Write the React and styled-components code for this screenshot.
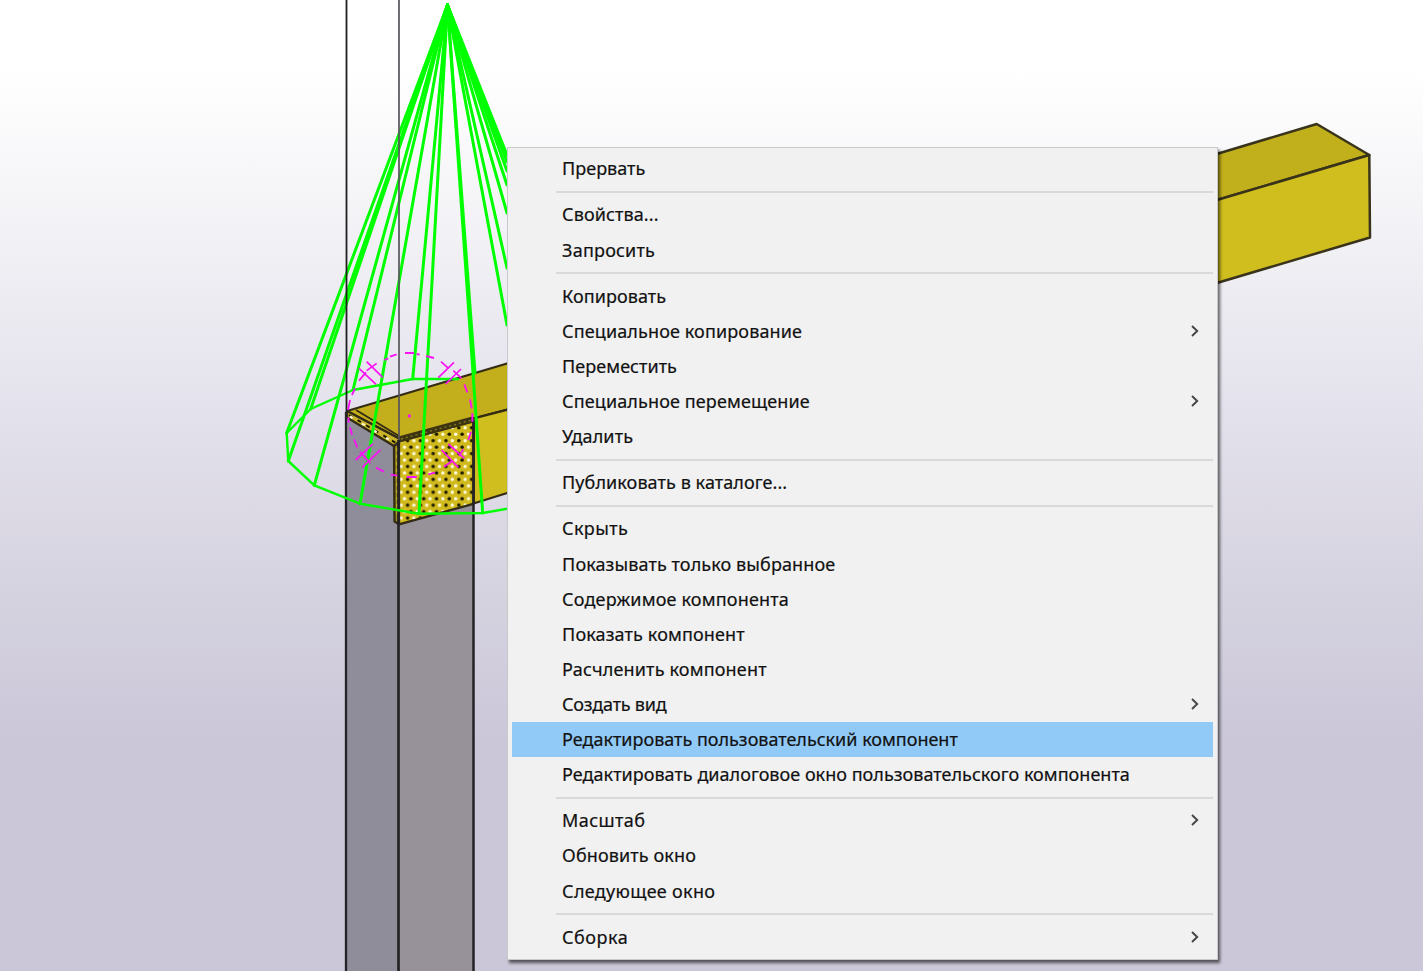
import React from "react";
import styled, { createGlobalStyle } from "styled-components";

const GlobalStyle = createGlobalStyle`
  html, body { margin: 0; padding: 0; overflow: hidden; }
`;

const Viewport = styled.main`
  position: relative;
  width: 1423px;
  height: 971px;
  overflow: hidden;
  background: linear-gradient(
    #ffffff 0, #ffffff 70px, #fbfbfc 120px, #f0eff4 260px,
    #e4e2ec 405px, #d7d4e1 575px, #cbc7d9 740px, #cbc7d9 971px
  );
`;

const Scene = styled.svg`
  display: block;
  width: 1423px;
  height: 971px;
`;

const ContextMenu = styled.ul`
  position: absolute;
  left: 507px;
  top: 147px;
  box-sizing: border-box;
  width: 711px;
  height: 813px;
  margin: 0;
  padding: 3.5px 4.5px 0 3.5px;
  list-style: none;
  background: #f1f1f1;
  border: 1px solid #c9c9cb;
  box-shadow: 2px 3px 3px 0 rgba(0, 0, 0, 0.6);
  clip-path: inset(0 -8px -8px 0);
  font-family: "Noto Sans", "Open Sans", sans-serif;
  font-size: 18px;
  color: #111;
`;

const MenuItem = styled.li`
  display: flex;
  align-items: center;
  justify-content: space-between;
  box-sizing: border-box;
  height: 35.1px;
  padding: 0 13px 1.6px 50.6px;
  background: ${(p) => (p.$active ? "#91c9f7" : "transparent")};
  cursor: default;
`;

const Label = styled.span`
  white-space: nowrap;
  line-height: 24px;
  letter-spacing: ${(p) => p.$tracking}px;
  -webkit-text-stroke: 0.2px #111;
`;

const Divider = styled.li`
  height: 2px;
  margin: 4.5px 0 4.6px 44.5px;
  background: #d9d9d9;
`;

const Arrow = styled.svg`
  flex: none;
  width: 10px;
  height: 14px;
  fill: none;
  stroke: #454545;
  stroke-width: 1.9;
`;

const groups = [
  [["Прервать", 0.0]],
  [["Свойства...", 0.1], ["Запросить", 0.2]],
  [
    ["Копировать", 0.05],
    ["Специальное копирование", 0.12, "sub"],
    ["Переместить", 0.05],
    ["Специальное перемещение", 0.12, "sub"],
    ["Удалить", 0.12],
  ],
  [["Публиковать в каталоге...", 0.08]],
  [
    ["Скрыть", 0.35],
    ["Показывать только выбранное", 0.1],
    ["Содержимое компонента", 0.18],
    ["Показать компонент", 0.13],
    ["Расчленить компонент", 0.17],
    ["Создать вид", -0.24, "sub"],
    ["Редактировать пользовательский компонент", -0.01, "active"],
    ["Редактировать диалоговое окно пользовательского компонента", 0.025],
  ],
  [["Масштаб", 0.4, "sub"], ["Обновить окно", 0.12], ["Следующее окно", 0.3]],
  [["Сборка", 0.5, "sub"]],
];

const coneBase = [
  [286.7, 433], [288.3, 461], [314.3, 485.3], [360, 503.7], [419, 513.7],
  [482.7, 513], [310.7, 409], [353, 390], [412.7, 379], [475, 373],
  [507, 325], [507, 268], [507, 213], [507, 185], [507, 171], [507, 162], [507, 155],
];

function Model() {
  return (
    <Scene viewBox="0 0 1423 971">
      <defs>
        <pattern id="studs" x="402.8" y="508.4" width="12.8" height="12.9" patternUnits="userSpaceOnUse">
          <rect width="12.8" height="12.9" fill="#d0b91c" />
          <g fill="#fffbe0">
            <circle cx="1.7" cy="3.2" r="1.7" />
            <circle cx="11.1" cy="9.65" r="1.7" />
          </g>
          <g fill="#1c1800">
            <circle cx="8.1" cy="3.2" r="1.75" />
            <circle cx="4.8" cy="9.65" r="1.75" />
          </g>
        </pattern>
      </defs>

      {/* column */}
      <path d="M346 412L399 444V971H346Z" fill="#8f8d9a" />
      <path d="M399 440L473.5 420V971H399Z" fill="#979299" />

      {/* near beam */}
      <g stroke="#322c14" strokeWidth="2.3" strokeLinejoin="round">
        <path d="M347 411L512 362V408.5L473 418.5L399 438.5Z" fill="#c3ae1b" />
        <path d="M473.5 418.5L512 408.5V491.5L473.5 503.5Z" fill="#d0bd1e" />
        <path d="M347 411L399 438.5V444L394 446L347 417.5Z" fill="#c9b52a" />
        <path d="M394 446L399 442V524.3L394.5 521.5Z" fill="#9d8b1c" />
        <path d="M399 441L473.5 421V503.8L399 524.3Z" fill="url(#studs)" />
      </g>
      <path d="M356 410L399 436" stroke="#322c14" strokeWidth="1.8" />
      <path d="M349 415L396 443" stroke="#1c1800" strokeWidth="2" strokeDasharray="4 6" />
      <path d="M350 416.5L394 442.5" stroke="#fffbe0" strokeWidth="2.2" strokeDasharray="3 11" />
      <path d="M399 439.5L473 419.5" stroke="#3d3512" strokeWidth="6" />
      <path d="M401 439L472 420" stroke="#887922" strokeWidth="1.3" strokeDasharray="2 3" />
      <path d="M397 448V518" stroke="#d0bd1e" strokeWidth="1.4" strokeDasharray="3 4" />

      {/* far end of the beam */}
      <g stroke="#38331a" strokeWidth="2.5" strokeLinejoin="round">
        <path d="M1200 159L1316.7 124L1369.3 155L1200 205Z" fill="#c1af1b" />
        <path d="M1200 205L1369.3 155L1370 237.5L1200 288Z" fill="#d0bd1e" />
      </g>

      {/* column edges */}
      <g stroke="#242326">
        <path d="M346 412V971" strokeWidth="2.3" />
        <path d="M398.5 440V971" strokeWidth="2.7" />
        <path d="M473.5 420V971" strokeWidth="2.5" />
      </g>

      {/* cone */}
      <g stroke="#00ff00" strokeWidth="3" fill="none" strokeLinejoin="round" strokeLinecap="round">
        {coneBase.map(([x, y]) => (
          <path key={`${x}-${y}`} d={`M447.5 5L${x} ${y}`} />
        ))}
        <path
          strokeWidth="2.4"
          d="M458 379H412.7L353 390L310.7 409L286.7 433L288.3 461L314.3 485.3L360 503.7L419 513.7L482.7 513L512 508"
        />
      </g>
      <path d="M346.5 0V412" stroke="#202020" strokeWidth="1.8" />
      <path d="M399 0V440" stroke="#55555a" strokeWidth="1.7" />

      {/* bolt circle */}
      <g transform="translate(270 330) scale(0.33333)" stroke="#fa14f5" strokeWidth="5.6" fill="none">
        <path d="M343 90L355 85M360 80L380 73M405 69H432M440 72L449 74M468 78L492 84M583 163L592 187M600 208L605 235M607 250V275M603 305L595 330M495 428L475 433M440 441H410M382 437L362 434M342 425L318 413M262 352L252 328M246 315L240 292M235 262L236 278M234 240L240 210M246 195L255 175" />
        <path
          strokeWidth="5.2"
          d="M290 95L338 142M267 115L318 163M320 100L290 122M288 127L267 152M513 95L533 113M552 97L505 143M573 117L527 162M550 122L575 145M308 342L257 390M331 360L277 412M270 365L301 400M535 342L583 385M515 360L565 412M580 358L567 378M548 392L522 410"
        />
        <circle cx="418" cy="258" r="5" fill="#fa14f5" stroke="none" />
      </g>
    </Scene>
  );
}

export default function App() {
  return (
    <Viewport>
      <GlobalStyle />
      <Model />
      <ContextMenu role="menu">
        {groups.map((items, g) => (
          <React.Fragment key={items[0][0]}>
            {g > 0 && <Divider role="separator" />}
            {items.map(([text, tracking, kind]) => (
              <MenuItem key={text} role="menuitem" $active={kind === "active"}>
                <Label $tracking={tracking}>{text}</Label>
                {kind === "sub" && (
                  <Arrow viewBox="0 0 10 14">
                    <path d="M2 2L7.2 7L2 12" />
                  </Arrow>
                )}
              </MenuItem>
            ))}
          </React.Fragment>
        ))}
      </ContextMenu>
    </Viewport>
  );
}
